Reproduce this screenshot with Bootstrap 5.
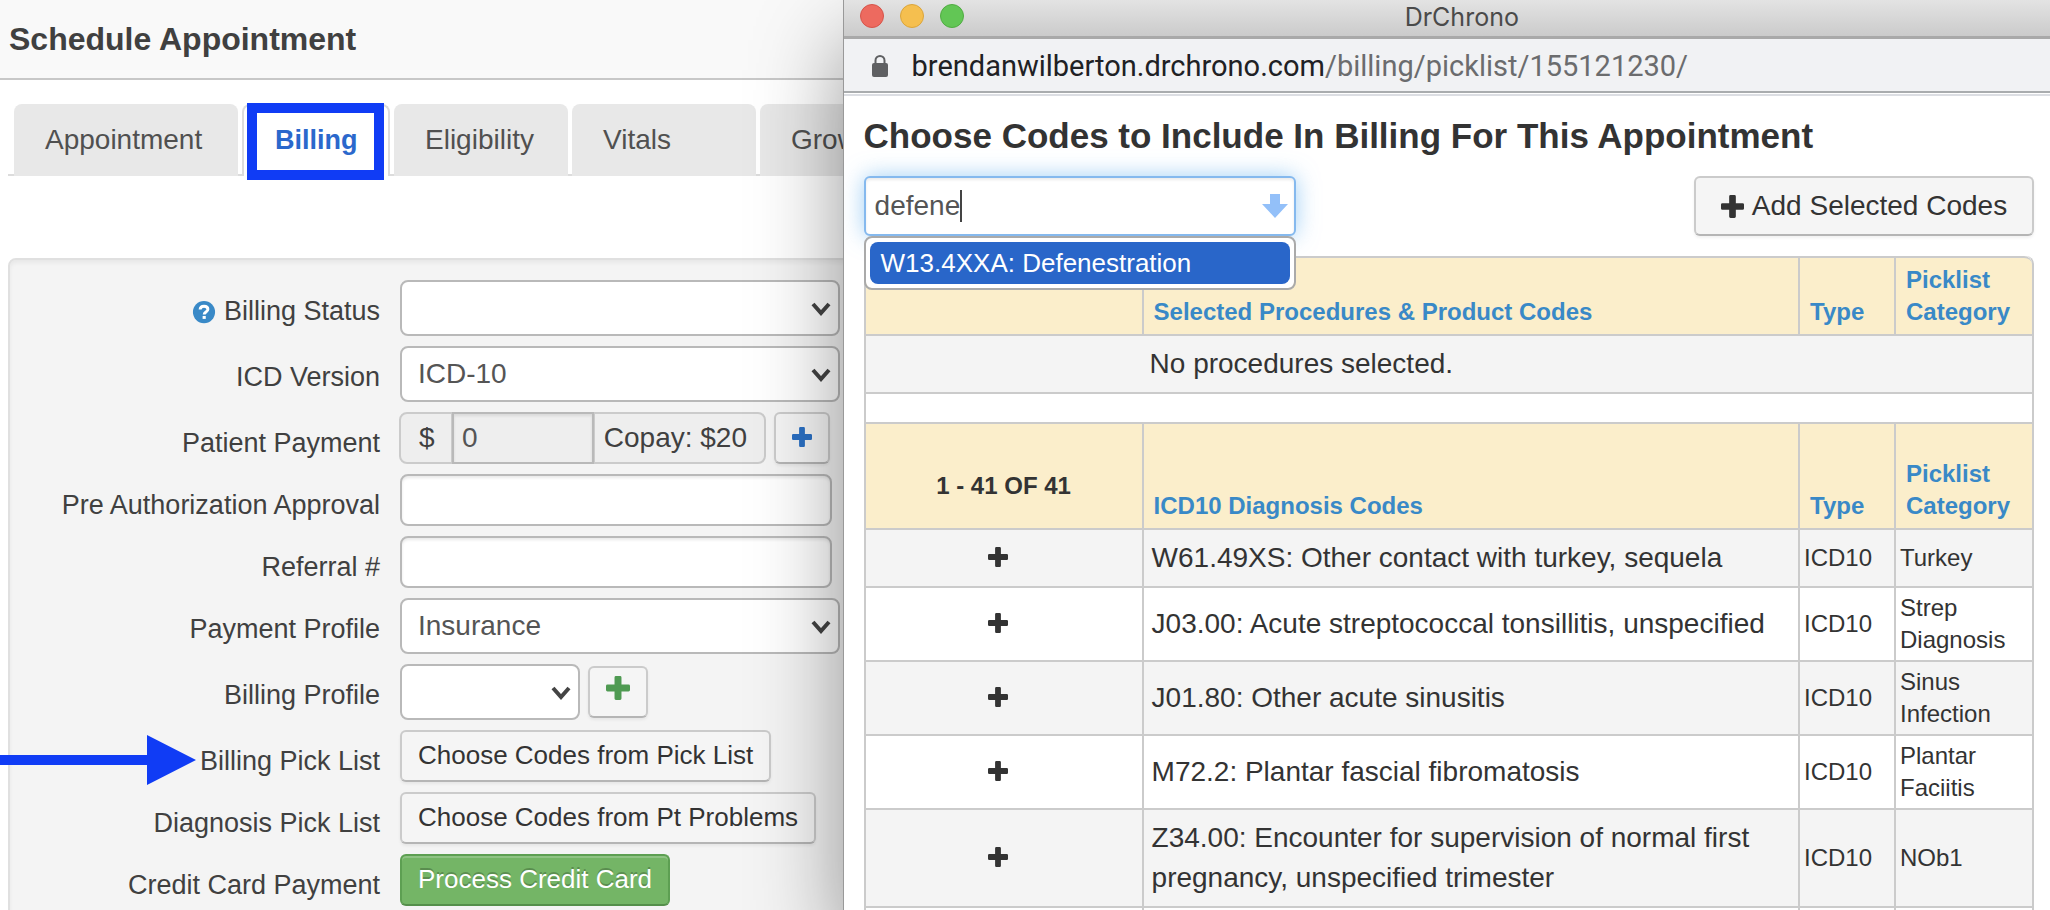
<!DOCTYPE html>
<html lang="en">
<head>
<meta charset="utf-8">
<meta name="viewport" content="width=device-width, initial-scale=1">
<title>Schedule Appointment</title>
<link href="https://cdn.jsdelivr.net/npm/bootstrap@5.3.0/dist/css/bootstrap.min.css" rel="stylesheet">
<style>
  :root { --line: #cbcbcb; --mark-blue: #103cf5; --link-blue: #3989c7; }
  body { font-family: "Liberation Sans", Arial, sans-serif; font-size: 28px; line-height: 40px; color: #333; }
  svg { flex: none; }

  /* scheduling pane */
  .pane { flex: 0 0 41.15%; min-width: 0; color: #404040; }
  .pane-head { height: 80px; padding-left: 9px; background: #f9f9f9; border-bottom: 2px solid #c8c8c8; }
  .pane-head h1 { font-size: 32px; line-height: 40px; font-weight: 700; }
  .tabs { margin: 24px 0 82px 8px; padding-left: 6px; gap: 4px; border-bottom: 2px solid #dcdcdc; }
  .tabs .nav-item { margin-bottom: -2px; flex: none; }
  .tabs .nav-link { height: 72px; margin: 0; padding: 16px 31px; border: 0; border-radius: 8px 8px 0 0; background: #e8e8e8; color: #505050; }
  .tabs .nav-link.active { border: 2px solid #dcdcdc; border-bottom: 0; background: #fff; color: #2b68cc; font-size: 27px; font-weight: 700; padding: 14px 31px; }
  .w-appt { width: 224px; } .w-bill { width: 148px; } .w-elig { width: 174px; } .w-vital { width: 184px; }
  .callout { position: absolute; inset: -1px 6px -4px 5px; border: 10px solid var(--mark-blue); pointer-events: none; }
  .panel { margin: 0 -20px 0 8px; padding: 20px 22px 20px 0; background: #f4f4f4; border: 2px solid #e0e0e0; border-radius: 8px; box-shadow: inset 0 3px 4px rgba(0,0,0,.05); }
  .line-item { display: grid; grid-template-columns: 370px 1fr; column-gap: 20px; margin-bottom: 10px; }
  .line-item > label, .line-item > .lbl { padding-top: 11px; line-height: 40px; font-size: 27px; text-align: right; white-space: nowrap; }
  .pane .form-select, .pane .form-control { font-size: 28px; line-height: 40px; color: #555; border: 2px solid #b9b9b9; border-radius: 8px; }
  .pane .form-select { height: 56px; padding: 4px 40px 4px 16px; background-size: 20px 15px; background-position: right 7px center;
    background-image: url("data:image/svg+xml,%3Csvg xmlns='http://www.w3.org/2000/svg' viewBox='0 0 20 15'%3E%3Cpath d='M2 3l8 9 8-9' fill='none' stroke='%23444' stroke-width='4'/%3E%3C/svg%3E"); }
  .pane .form-control { height: 52px; box-shadow: inset 0 2px 3px rgba(0,0,0,.09); }
  .text-field { width: calc(100% - 8px); }
  .pane .w-profile { width: 180px; }
  .money { width: 367px; margin-left: -1px; }
  .money .input-group-text { font-size: 28px; line-height: 40px; padding: 4px 17px 4px 9px; background: #eee; border: 2px solid var(--line); border-radius: 8px; color: #404040; }
  .money .input-group-text:first-child { padding: 4px 18px; }
  .money .form-control { background: #eee; padding: 4px 8px; border-radius: 0; }
  .money :first-child { width: 54px; }
  .btn-soft { height: 52px; padding: 3px 16px 5px; font-size: 26px; line-height: 38px; color: #333; background: #f5f5f5; border: 2px solid var(--line); border-bottom-color: #b5b5b5; border-radius: 6px; box-shadow: 0 2px 3px rgba(0,0,0,.06); white-space: nowrap; }
  .btn-soft:hover { background: #e9e9e9; border-color: #b5b5b5; }
  .btn-pay { color: #fff; background: #74b566; border-color: #5d9f52; border-bottom-color: #558f4b; text-shadow: 0 -2px 0 rgba(0,0,0,.22); box-shadow: inset 0 2px 0 rgba(255,255,255,.2); }
  .pointer { position: absolute; left: -10px; top: 5px; }

  /* picklist window */
  .popup { position: relative; z-index: 2; min-width: 0; background: #fff; box-shadow: -1px 0 0 #999, 0 40px 84px rgba(0,0,0,.42); }
  .title-bar { height: 39px; padding: 0 16px; background: linear-gradient(#e3e3e3, #cbcbcb); border-bottom: 3px solid #a9a9a9; }
  .title-bar .caption { padding-left: 30px; font: 25px/34px Inter, sans-serif; color: #4a4a4a; }
  .lights { position: absolute; left: 16px; top: 4px; gap: 16px; }
  .lights span { width: 24px; height: 24px; border-radius: 50%; }
  .l-red { background: #ed6a5f; border: 1px solid #d6544a; } .l-yellow { background: #f5bf4f; border: 1px solid #dba53b; } .l-green { background: #62c655; border: 1px solid #50ac42; }
  .url-bar { height: 54px; padding: 2px 0 0 28px; gap: 24px; background: #f1f2f4; border-bottom: 2px solid #a9acae; font: 29px/40px Roboto, sans-serif; color: #6b6c6e; }
  .url-bar b { font-weight: 400; color: #202124; }
  .page { margin-top: 1px; border-top: 2px solid #dcdee3; padding: 20px 16px 0 20px; }
  .page h2 { font-size: 35px; line-height: 40px; font-weight: 700; margin-bottom: 20px; white-space: nowrap; }
  .search { width: 432px; position: relative; }
  .search .form-control { height: 60px; padding: 4px 44px 4px 9px; font-size: 28px; line-height: 40px; color: #555; border: 2px solid #85b9ee; border-radius: 6px; box-shadow: 0 0 22px rgba(82,168,236,.55), inset 0 2px 3px rgba(0,0,0,.08); }
  .caret { position: absolute; left: 96px; top: 14px; width: 2px; height: 32px; background: #444; }
  .search .arrow { position: absolute; right: 8px; top: 18px; }
  .search .dropdown-menu { display: block; top: 60px; left: 0; width: 100%; margin: 0; padding: 4px; border: 2px solid #aaa; border-radius: 8px; }
  .search .dropdown-item { padding: 0 11px; font-size: 26px; line-height: 42px; color: #fff; background: #2966c9; border-radius: 8px; }
  .btn-add { height: 60px; width: 340px; padding: 4px 20px; font-size: 28px; gap: 8px; }
  .codes { width: 100%; table-layout: fixed; margin-top: 20px; border-collapse: separate; border-spacing: 0; border-right: 2px solid var(--line); border-radius: 8px 8px 0 0; }
  .codes th, .codes td { border-top: 2px solid var(--line); border-left: 2px solid var(--line); }
  .codes .c-add { width: 278px; } .codes .c-type { width: 96px; } .codes .c-cat { width: 138px; }
  .codes th { background: #fbeecb; padding: 6px 10px; font-size: 24px; line-height: 32px; vertical-align: bottom; }
  .codes th a { color: var(--link-blue); text-decoration: none; }
  .codes tr:first-child th:first-child { border-top-left-radius: 8px; }
  .codes tr:first-child th:last-child { border-top-right-radius: 8px; }
  .codes .second th { height: 106px; }
  .codes .second .count { padding-top: 26px; vertical-align: middle; text-align: center; }
  .codes td { padding: 8px; vertical-align: middle; }
  .codes td.tag { padding: 4px; font-size: 24px; line-height: 32px; }
  .codes .pick { padding: 0 12px 0 0; text-align: center; }
  .codes .pick button { display: inline-flex; padding: 0; border: 0; background: none; color: #333; }
  .codes .shade td { background: #f4f4f4; }
  .codes .spacer td { height: 30px; padding: 0; }
  .codes .no-left { border-left: 0; }
</style>
</head>
<body>
<svg class="d-none" aria-hidden="true">
  <symbol id="plus" viewBox="0 0 20 20"><path fill="currentColor" d="M8.300 0h3.400a1.200 1.200 0 0 1 1.200 1.200v5.900h5.900A1.200 1.200 0 0 1 20 8.300v3.400a1.200 1.200 0 0 1-1.200 1.200h-5.900v5.900a1.200 1.200 0 0 1-1.200 1.200H8.300a1.200 1.200 0 0 1-1.200-1.200v-5.900H1.200A1.200 1.200 0 0 1 0 11.700V8.300a1.200 1.200 0 0 1 1.200-1.200h5.900V1.200A1.200 1.200 0 0 1 8.300 0z"/></symbol>
</svg>
<div class="d-flex vh-100 overflow-hidden">

  <main class="pane overflow-hidden">
    <header class="pane-head d-flex align-items-center"><h1 class="m-0">Schedule Appointment</h1></header>
    <ul class="nav tabs flex-nowrap">
      <li class="nav-item w-appt"><a class="nav-link" href="#">Appointment</a></li>
      <li class="nav-item w-bill position-relative"><a class="nav-link active" href="#">Billing</a><span class="callout"></span></li>
      <li class="nav-item w-elig"><a class="nav-link" href="#">Eligibility</a></li>
      <li class="nav-item w-vital"><a class="nav-link" href="#">Vitals</a></li>
      <li class="nav-item"><a class="nav-link" href="#">Growth</a></li>
    </ul>

    <form class="panel">
      <div class="line-item">
        <label for="status">
          <svg width="24" height="24" viewBox="0 0 24 26" aria-hidden="true"><circle cx="12" cy="12" r="12" fill="#3989c7"/><path d="M7.800 9.200C7.900 6.600 9.600 5.600 12 5.600c2.600 0 4.200 1.300 4.200 3.300 0 3-4 2.900-4 5.600" fill="none" stroke="#fff" stroke-width="3.200"/><path d="M10.500 16.200h3.400v3.200h-3.400z" fill="#fff"/></svg>
          Billing Status</label>
        <select class="form-select" id="status"><option></option></select>
      </div>
      <div class="line-item">
        <label for="icd">ICD Version</label>
        <select class="form-select" id="icd"><option>ICD-10</option></select>
      </div>
      <div class="line-item">
        <label for="payment">Patient Payment</label>
        <div class="d-flex gap-2">
          <div class="input-group money flex-nowrap">
            <span class="input-group-text">$</span>
            <input class="form-control" id="payment" value="0">
            <span class="input-group-text">Copay: $20</span>
          </div>
          <button type="button" class="btn btn-soft d-flex align-items-center" aria-label="Add payment"><svg width="20" height="20" color="#2b70c4"><use href="#plus"/></svg></button>
        </div>
      </div>
      <div class="line-item">
        <label for="preauth">Pre Authorization Approval</label>
        <input class="form-control text-field" id="preauth">
      </div>
      <div class="line-item">
        <label for="referral">Referral #</label>
        <input class="form-control text-field" id="referral">
      </div>
      <div class="line-item">
        <label for="payprofile">Payment Profile</label>
        <select class="form-select" id="payprofile"><option>Insurance</option></select>
      </div>
      <div class="line-item">
        <label for="billprofile">Billing Profile</label>
        <div class="d-flex align-items-center gap-2">
          <select class="form-select w-profile" id="billprofile"><option></option></select>
          <button type="button" class="btn btn-soft d-flex pt-2" aria-label="Add billing profile"><svg width="24" height="24" color="#4f9a52"><use href="#plus"/></svg></button>
        </div>
      </div>
      <div class="line-item position-relative">
        <svg class="pointer" width="196" height="50" aria-hidden="true"><path fill="#103cf5" d="M0 20h147V0l49 25-49 25V30H0z"/></svg>
        <span class="lbl">Billing Pick List</span>
        <div class="d-flex"><button type="button" class="btn btn-soft">Choose Codes from Pick List</button></div>
      </div>
      <div class="line-item">
        <span class="lbl">Diagnosis Pick List</span>
        <div class="d-flex"><button type="button" class="btn btn-soft">Choose Codes from Pt Problems</button></div>
      </div>
      <div class="line-item">
        <span class="lbl">Credit Card Payment</span>
        <div class="d-flex"><button type="button" class="btn btn-soft btn-pay">Process Credit Card</button></div>
      </div>
    </form>
  </main>

  <section class="popup flex-grow-1">
    <div class="title-bar text-center">
      <div class="lights d-flex"><span class="l-red"></span><span class="l-yellow"></span><span class="l-green"></span></div>
      <div class="caption">DrChrono</div>
    </div>
    <div class="url-bar d-flex align-items-center">
      <svg width="16" height="22" viewBox="0 0 16 22" aria-hidden="true"><rect y="8" width="16" height="14" rx="2" fill="#5f6062"/><path d="M3.500 9V5.500a4.500 4.500 0 0 1 9 0V9" fill="none" stroke="#5f6062" stroke-width="2"/></svg>
      <div><b>brendanwilberton.drchrono.com</b>/billing/picklist/155121230/</div>
    </div>
    <div class="page">
      <h2>Choose Codes to Include In Billing For This Appointment</h2>
      <div class="d-flex justify-content-between">
        <div class="search">
          <input class="form-control" aria-label="Search codes" value="defene">
          <span class="caret"></span>
          <svg class="arrow" width="26" height="24" viewBox="0 0 26 24" aria-hidden="true"><path fill="#93c0f9" d="M8 0h10v10h8L13 24 0 10h8z"/></svg>
          <div class="dropdown-menu"><a class="dropdown-item" href="#">W13.4XXA: Defenestration</a></div>
        </div>
        <button type="button" class="btn btn-soft btn-add d-flex align-items-center justify-content-center"><svg width="23" height="23"><use href="#plus"/></svg>Add Selected Codes</button>
      </div>

      <table class="codes">
        <colgroup><col class="c-add"><col><col class="c-type"><col class="c-cat"></colgroup>
        <tr>
          <th></th>
          <th><a href="#">Selected Procedures &amp; Product Codes</a></th>
          <th><a href="#">Type</a></th>
          <th><a href="#">Picklist Category</a></th>
        </tr>
        <tr class="shade"><td></td><td class="no-left" colspan="3">No procedures selected.</td></tr>
        <tr class="spacer"><td colspan="4"></td></tr>
        <tr class="second">
          <th class="count">1 - 41 OF 41</th>
          <th><a href="#">ICD10 Diagnosis Codes</a></th>
          <th><a href="#">Type</a></th>
          <th><a href="#">Picklist Category</a></th>
        </tr>
        <tr class="shade">
          <td class="pick"><button type="button" aria-label="Add"><svg width="20" height="20"><use href="#plus"/></svg></button></td>
          <td>W61.49XS: Other contact with turkey, sequela</td><td class="tag">ICD10</td><td class="tag">Turkey</td>
        </tr>
        <tr>
          <td class="pick"><button type="button" aria-label="Add"><svg width="20" height="20"><use href="#plus"/></svg></button></td>
          <td>J03.00: Acute streptococcal tonsillitis, unspecified</td><td class="tag">ICD10</td><td class="tag">Strep Diagnosis</td>
        </tr>
        <tr class="shade">
          <td class="pick"><button type="button" aria-label="Add"><svg width="20" height="20"><use href="#plus"/></svg></button></td>
          <td>J01.80: Other acute sinusitis</td><td class="tag">ICD10</td><td class="tag">Sinus Infection</td>
        </tr>
        <tr>
          <td class="pick"><button type="button" aria-label="Add"><svg width="20" height="20"><use href="#plus"/></svg></button></td>
          <td>M72.2: Plantar fascial fibromatosis</td><td class="tag">ICD10</td><td class="tag">Plantar Faciitis</td>
        </tr>
        <tr class="shade">
          <td class="pick"><button type="button" aria-label="Add"><svg width="20" height="20"><use href="#plus"/></svg></button></td>
          <td>Z34.00: Encounter for supervision of normal first pregnancy, unspecified trimester</td><td class="tag">ICD10</td><td class="tag">NOb1</td>
        </tr>
        <tr class="spacer"><td></td><td></td><td></td><td></td></tr>
      </table>
    </div>
  </section>
</div>
<script src="https://cdn.jsdelivr.net/npm/bootstrap@5.3.0/dist/js/bootstrap.bundle.min.js"></script>
</body>
</html>
